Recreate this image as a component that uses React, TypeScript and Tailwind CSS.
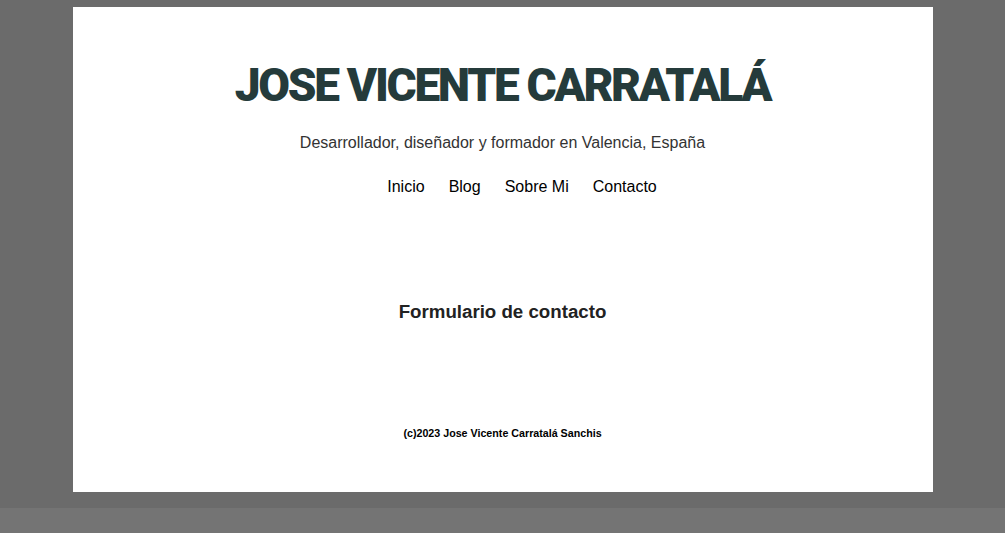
export default function App() {
  const links = ["Inicio", "Blog", "Sobre Mi", "Contacto"];
  return (
    <div className="min-h-[533px] bg-[#747474] font-['Liberation_Sans',Arial,sans-serif]">
      <div className="h-[508px] bg-[#6b6b6b] pt-[7px]">
        <div className="mx-auto flex h-[485px] w-[860px] flex-col items-center bg-white">
          <h1 className="mt-[55px] font-['Roboto',sans-serif] text-[46px] font-black leading-none tracking-[-0.05em] text-[#253b3b] uppercase">
            Jose Vicente Carratalá
          </h1>
          <p className="mt-[25px] text-[16px] leading-5 text-[#333]">
            Desarrollador, diseñador y formador en Valencia, España
          </p>
          <ul className="mt-[24px] flex gap-[24px] pl-[39px] text-[16px] leading-5 text-black">
            {links.map((l) => (
              <li key={l}>
                <a href="#">{l}</a>
              </li>
            ))}
          </ul>
          <h2 className="mt-[103px] text-[18.7px] font-bold leading-6 text-[#222]">
            Formulario de contacto
          </h2>
          <footer className="mt-[101px] text-[10.7px] font-bold leading-4 text-black">
            (c)2023 Jose Vicente Carratalá Sanchis
          </footer>
        </div>
      </div>
    </div>
  );
}
